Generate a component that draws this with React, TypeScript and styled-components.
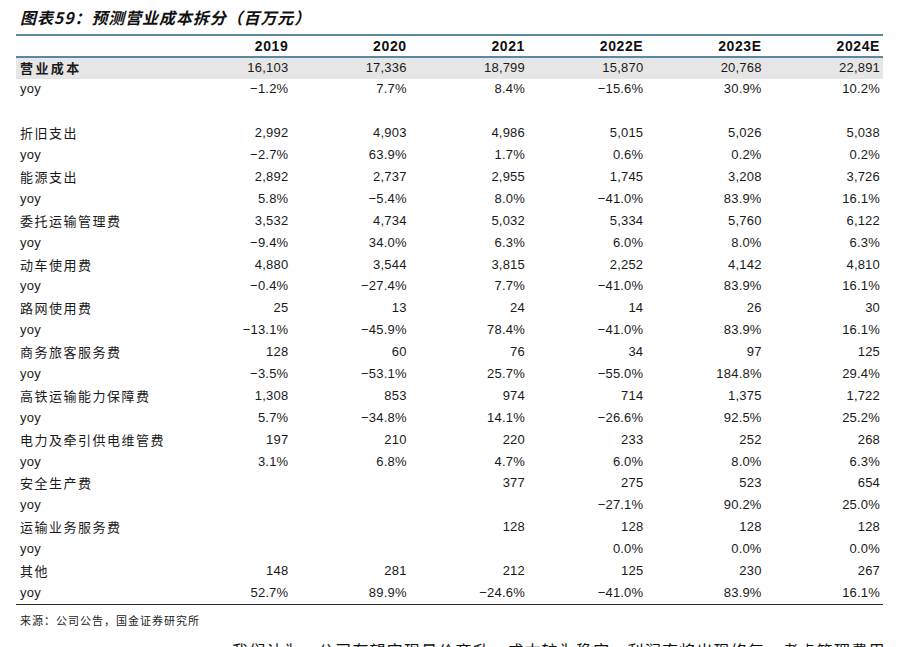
import React from 'react';
import styled, { createGlobalStyle } from 'styled-components';

const GlobalStyle = createGlobalStyle`
  html, body {
    margin: 0;
    padding: 0;
    background: #ffffff;
    overflow: hidden;
  }
  body {
    font-family: "Liberation Sans", "Noto Sans CJK SC", sans-serif;
    color: #1a1a1a;
  }
`;

type Row = {
  label: string;
  values: string[];
  kind?: 'total' | 'yoy' | 'item' | 'blank';
};

const years = ['2019', '2020', '2021', '2022E', '2023E', '2024E'];

const rows: Row[] = [
  { label: '营业成本', kind: 'total', values: ['16,103', '17,336', '18,799', '15,870', '20,768', '22,891'] },
  { label: 'yoy', kind: 'yoy', values: ['−1.2%', '7.7%', '8.4%', '−15.6%', '30.9%', '10.2%'] },
  { label: '', kind: 'blank', values: ['', '', '', '', '', ''] },
  { label: '折旧支出', values: ['2,992', '4,903', '4,986', '5,015', '5,026', '5,038'] },
  { label: 'yoy', kind: 'yoy', values: ['−2.7%', '63.9%', '1.7%', '0.6%', '0.2%', '0.2%'] },
  { label: '能源支出', values: ['2,892', '2,737', '2,955', '1,745', '3,208', '3,726'] },
  { label: 'yoy', kind: 'yoy', values: ['5.8%', '−5.4%', '8.0%', '−41.0%', '83.9%', '16.1%'] },
  { label: '委托运输管理费', values: ['3,532', '4,734', '5,032', '5,334', '5,760', '6,122'] },
  { label: 'yoy', kind: 'yoy', values: ['−9.4%', '34.0%', '6.3%', '6.0%', '8.0%', '6.3%'] },
  { label: '动车使用费', values: ['4,880', '3,544', '3,815', '2,252', '4,142', '4,810'] },
  { label: 'yoy', kind: 'yoy', values: ['−0.4%', '−27.4%', '7.7%', '−41.0%', '83.9%', '16.1%'] },
  { label: '路网使用费', values: ['25', '13', '24', '14', '26', '30'] },
  { label: 'yoy', kind: 'yoy', values: ['−13.1%', '−45.9%', '78.4%', '−41.0%', '83.9%', '16.1%'] },
  { label: '商务旅客服务费', values: ['128', '60', '76', '34', '97', '125'] },
  { label: 'yoy', kind: 'yoy', values: ['−3.5%', '−53.1%', '25.7%', '−55.0%', '184.8%', '29.4%'] },
  { label: '高铁运输能力保障费', values: ['1,308', '853', '974', '714', '1,375', '1,722'] },
  { label: 'yoy', kind: 'yoy', values: ['5.7%', '−34.8%', '14.1%', '−26.6%', '92.5%', '25.2%'] },
  { label: '电力及牵引供电维管费', values: ['197', '210', '220', '233', '252', '268'] },
  { label: 'yoy', kind: 'yoy', values: ['3.1%', '6.8%', '4.7%', '6.0%', '8.0%', '6.3%'] },
  { label: '安全生产费', values: ['', '', '377', '275', '523', '654'] },
  { label: 'yoy', kind: 'yoy', values: ['', '', '', '−27.1%', '90.2%', '25.0%'] },
  { label: '运输业务服务费', values: ['', '', '128', '128', '128', '128'] },
  { label: 'yoy', kind: 'yoy', values: ['', '', '', '0.0%', '0.0%', '0.0%'] },
  { label: '其他', values: ['148', '281', '212', '125', '230', '267'] },
  { label: 'yoy', kind: 'yoy', values: ['52.7%', '89.9%', '−24.6%', '−41.0%', '83.9%', '16.1%'] },
];

const Page = styled.div`
  padding: 0 18px 0 16px;
`;

const Title = styled.h1`
  margin: 0;
  height: 34px;
  padding: 7px 0 0 4px;
  box-sizing: border-box;
  font-family: "Noto Sans CJK SC", sans-serif;
  font-size: 16px;
  line-height: 20px;
  font-weight: 700;
  font-style: italic;
  letter-spacing: 0.9px;
  color: #111;
`;

const Table = styled.table`
  width: 867px;
  border-collapse: collapse;
  table-layout: fixed;
  border-top: 2px solid #5a87a4;
`;

const HeadRow = styled.tr`
  border-bottom: 2px solid #5a87a4;
`;

const HeadCell = styled.th`
  height: 20px;
  padding: 0 3px 0 0;
  text-align: right;
  font-size: 14px;
  font-weight: 700;
  letter-spacing: 0.6px;
  color: #111;
`;

const BodyRow = styled.tr<{ $shaded?: boolean; $last?: boolean }>`
  height: 21.9px;
  background: ${p => (p.$shaded ? '#e6e6e6' : 'transparent')};
  border-bottom: ${p => (p.$last ? '1.5px solid #2a2a2a' : 'none')};
`;

const LabelCell = styled.td<{ $kind?: string }>`
  padding: 0 0 2px 4px;
  white-space: nowrap;
  font-family: ${p => (p.$kind === 'yoy' ? '"Liberation Sans", sans-serif' : '"Noto Sans CJK SC", sans-serif')};
  font-size: 13px;
  letter-spacing: ${p => (p.$kind === 'yoy' ? '0.3px' : p.$kind === 'total' ? '2.4px' : '1.5px')};
  font-weight: ${p => (p.$kind === 'total' ? 700 : 400)};
  color: #1a1a1a;
`;

const NumCell = styled.td`
  padding: 0 3px 2px 0;
  text-align: right;
  font-size: 13px;
  letter-spacing: 0.2px;
  color: #1a1a1a;
  white-space: nowrap;
`;

const Source = styled.p`
  margin: 7px 0 0 4px;
  font-family: "Noto Sans CJK SC", sans-serif;
  font-size: 11px;
  line-height: 16px;
  letter-spacing: 1px;
  color: #222;
`;

const Body = styled.p`
  margin: 10px 0 0 216px;
  font-family: "Noto Sans CJK SC", sans-serif;
  font-size: 16px;
  line-height: 24px;
  letter-spacing: 1.2px;
  white-space: nowrap;
  color: #111;
`;

export default function App() {
  return (
    <>
      <GlobalStyle />
      <Page>
        <Title>图表59：预测营业成本拆分（百万元）</Title>
        <Table>
          <colgroup>
            <col style={{ width: 157 }} />
            {years.map(y => (
              <col key={y} />
            ))}
          </colgroup>
          <thead>
            <HeadRow>
              <HeadCell />
              {years.map(y => (
                <HeadCell key={y}>{y}</HeadCell>
              ))}
            </HeadRow>
          </thead>
          <tbody>
            {rows.map((r, i) => (
              <BodyRow key={i} $shaded={r.kind === 'total'} $last={i === rows.length - 1}>
                <LabelCell $kind={r.kind}>{r.label}</LabelCell>
                {r.values.map((v, j) => (
                  <NumCell key={j}>{v}</NumCell>
                ))}
              </BodyRow>
            ))}
          </tbody>
        </Table>
        <Source>来源：公司公告，国金证券研究所</Source>
        <Body>我们认为，公司有望实现量价齐升，成本较为稳定，利润率将出现修复，考虑管理费用</Body>
      </Page>
    </>
  );
}
